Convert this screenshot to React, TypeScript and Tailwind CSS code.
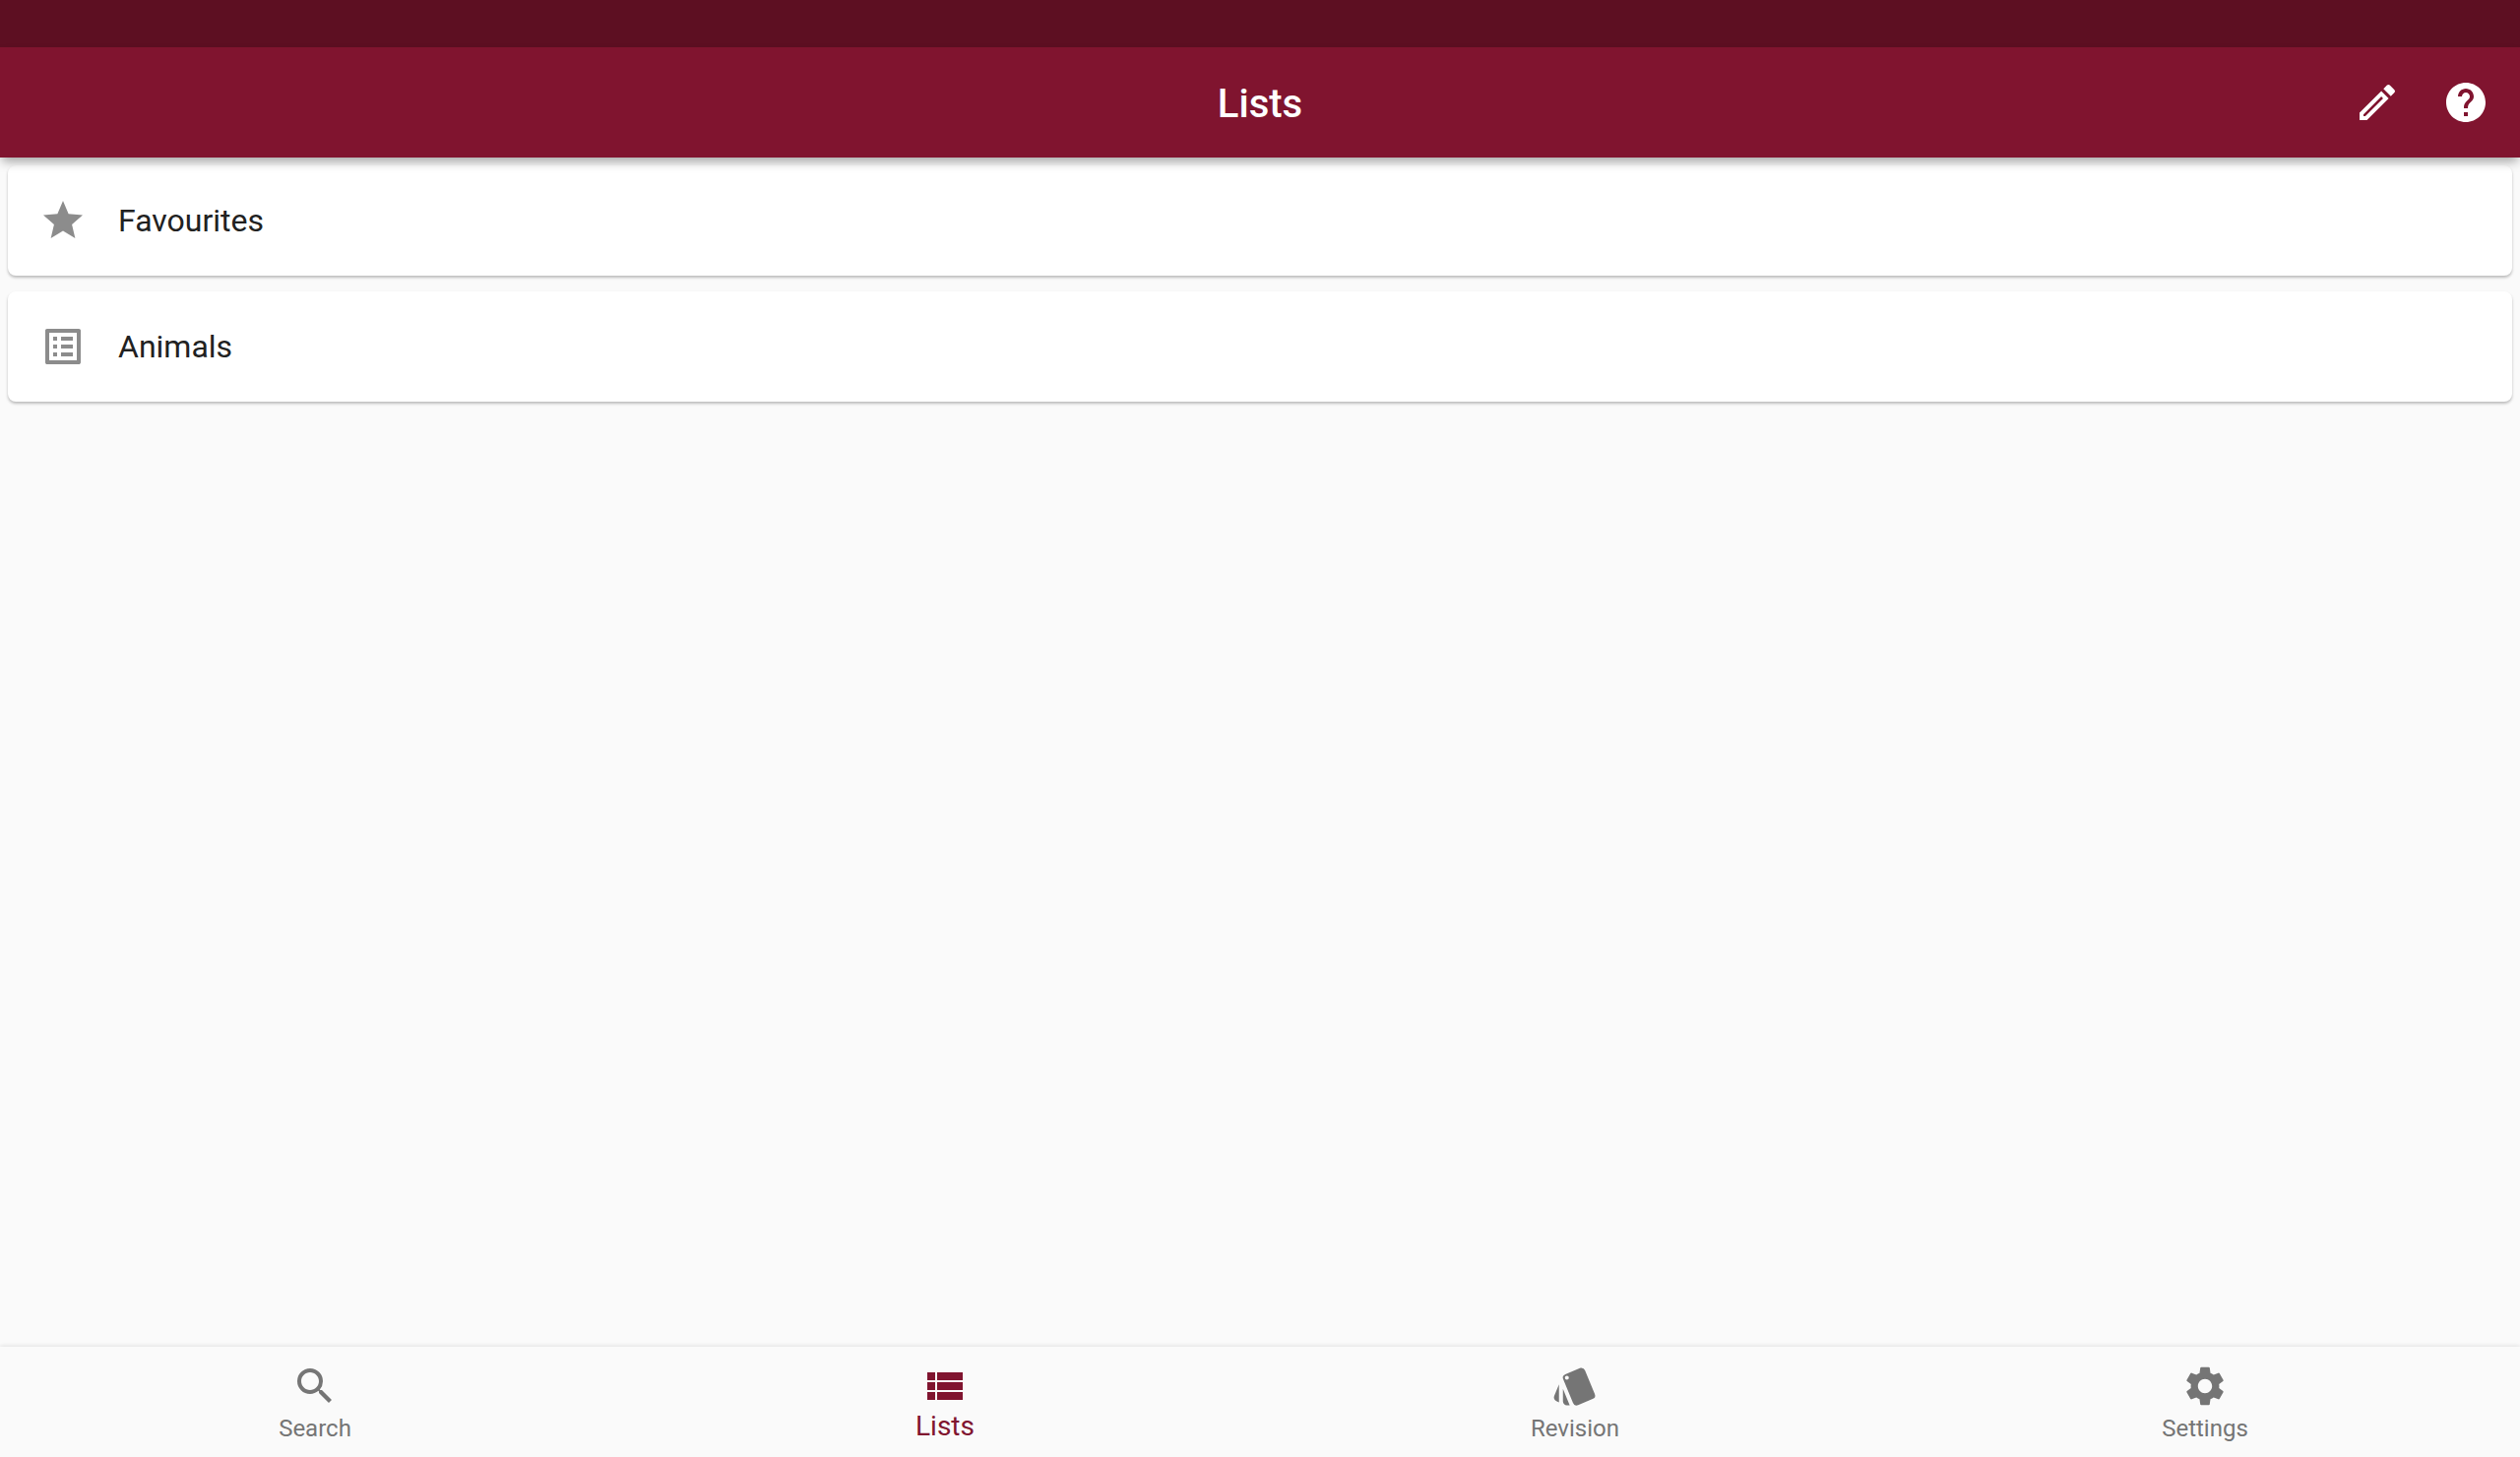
import { MdOutlineEdit, MdHelp, MdStar, MdOutlineListAlt, MdSearch, MdViewList, MdStyle, MdSettings } from "react-icons/md";

const lists = [
  { name: "Favourites", Icon: MdStar },
  { name: "Animals", Icon: MdOutlineListAlt },
];

const tabs = [
  { name: "Search", Icon: MdSearch, active: false },
  { name: "Lists", Icon: MdViewList, active: true },
  { name: "Revision", Icon: MdStyle, active: false },
  { name: "Settings", Icon: MdSettings, active: false },
];

export default function App() {
  return (
    <div className="flex min-h-screen flex-col bg-[#fafafa] font-['Roboto',sans-serif] antialiased">
      <div className="h-12 bg-[#5d0f22]" />
      <header className="z-10 grid h-28 grid-cols-[1fr_auto_1fr] items-center bg-[#80142f] px-[10px] text-white shadow-[0_6px_10px_-2px_rgba(0,0,0,0.35)]">
        <h1 className="col-start-2 pt-1 text-[40px] leading-none font-medium">Lists</h1>
        <div className="flex justify-end">
          <button aria-label="Edit lists" className="grid size-[90px] place-items-center">
            <MdOutlineEdit size={48} />
          </button>
          <button aria-label="Help" className="grid size-[90px] place-items-center">
            <MdHelp size={48} />
          </button>
        </div>
      </header>
      <main className="flex-1 px-2 pt-2">
        <ul className="flex flex-col gap-4">
          {lists.map(({ name, Icon }) => (
            <li key={name}>
              <button className="flex h-28 w-full items-center gap-8 rounded-lg bg-white px-8 text-left text-[32px] text-[#212121] shadow-[0_2px_3px_rgba(0,0,0,0.25)]">
                <Icon size={48} className="text-[#8c8c8c]" />
                {name}
              </button>
            </li>
          ))}
        </ul>
      </main>
      <nav className="grid h-28 grid-cols-4 bg-[#fafafa] shadow-[0_-1px_4px_rgba(0,0,0,0.1)]">
        {tabs.map(({ name, Icon, active }) => (
          <button
            key={name}
            aria-current={active ? "page" : undefined}
            className={
              active
                ? "flex flex-col items-center pt-4 text-[28px] leading-[34px] text-[#80142f]"
                : "flex flex-col items-center pt-4 text-2xl leading-[38px] text-[#757575]"
            }
          >
            <Icon size={48} />
            {name}
          </button>
        ))}
      </nav>
    </div>
  );
}
